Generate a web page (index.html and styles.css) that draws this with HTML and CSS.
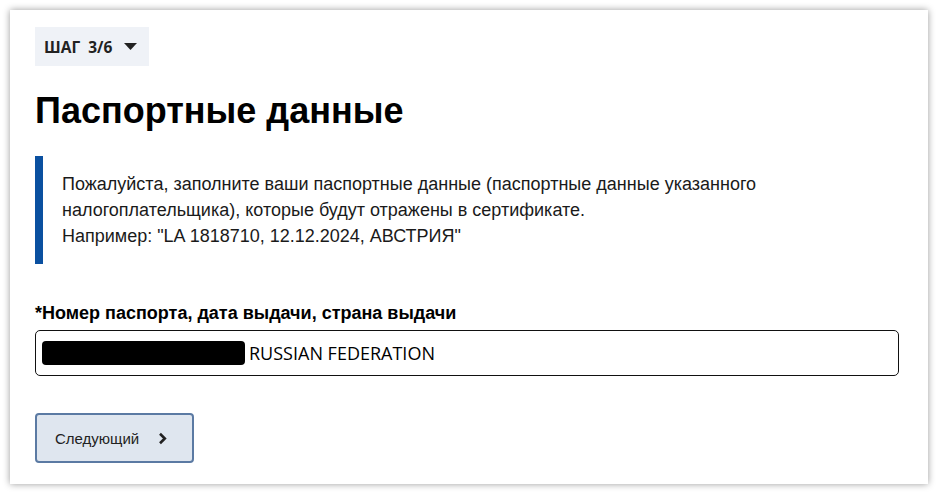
FILE: index.html
```html
<!DOCTYPE html>
<html lang="ru">
<head>
<meta charset="utf-8">
<link rel="stylesheet" href="styles.css">
</head>
<body>
<main class="card">
  <div class="step">
    <span class="step-label">ШАГ&nbsp; 3/6</span>
    <svg class="caret" width="13" height="7" viewBox="0 0 13 7"><path d="M0 0 H13 L6.5 7 Z" fill="#222"/></svg>
  </div>
  <h1 class="title">Паспортные данные</h1>
  <div class="info">
    <p>Пожалуйста, заполните ваши паспортные данные (паспортные данные указанного налогоплательщика), которые будут отражены в сертификате.<br>Например: "LA 1818710, 12.12.2024, АВСТРИЯ"</p>
  </div>
  <label class="field-label">*Номер паспорта, дата выдачи, страна выдачи</label>
  <div class="input">
    <span class="redacted"></span>
    <span class="value">RUSSIAN FEDERATION</span>
  </div>
  <button class="next">
    <span>Следующий</span>
    <svg width="9" height="13" viewBox="0 0 9 13"><path d="M2 1.8 L6.8 6.5 L2 11.2" fill="none" stroke="#222" stroke-width="2.6"/></svg>
  </button>
</main>
</body>
</html>
```

FILE: styles.css
```css
html, body {
  margin: 0;
  padding: 0;
  background: #ffffff;
}
body {
  padding: 10px;
  font-family: "Liberation Sans", Arial, sans-serif;
  color: #111;
}
.card {
  width: 918px;
  height: 474px;
  box-sizing: border-box;
  background: #fff;
  box-shadow: 0 0 7px rgba(0, 0, 0, 0.4);
  padding: 17px 25px 0 25px;
}
.step {
  display: inline-flex;
  align-items: center;
  gap: 12px;
  height: 39px;
  box-sizing: border-box;
  padding: 0 12px 0 9px;
  background: #eff2f7;
  font-family: "Open Sans", "Noto Sans", sans-serif;
  font-weight: 700;
  font-size: 15.5px;
  color: #222;
}
.step-label {
  white-space: pre;
}
.title {
  margin: 23px 0 0 0;
  font-size: 36px;
  line-height: 44px;
  font-weight: 700;
  color: #000;
}
.info {
  margin-top: 23px;
  border-left: 8px solid #0a50a0;
  padding: 15px 0 15px 19px;
}
.info p {
  margin: 0;
  font-size: 18px;
  line-height: 26px;
  color: #1a1a1a;
}
.field-label {
  display: block;
  margin-top: 39px;
  font-weight: 700;
  font-size: 18px;
  line-height: 20px;
  color: #000;
}
.input {
  margin-top: 7px;
  height: 46px;
  box-sizing: border-box;
  border: 1px solid #111;
  border-radius: 5px;
  display: flex;
  align-items: center;
  padding-left: 6px;
  width: 864px;
}
.redacted {
  width: 203px;
  height: 24px;
  background: #000;
  border-radius: 4px;
}
.value {
  margin-left: 4px;
  font-family: "Open Sans", "Noto Sans", sans-serif;
  font-size: 18px;
  color: #000;
}
.next {
  margin-top: 37px;
  width: 159px;
  height: 50px;
  box-sizing: border-box;
  border: 2px solid #5b7aa3;
  border-radius: 4px;
  background: #dfe6ef;
  display: flex;
  align-items: center;
  gap: 19px;
  padding: 0 0 0 18px;
  font-family: "Liberation Sans", Arial, sans-serif;
  font-size: 15px;
  color: #222;
}
```
